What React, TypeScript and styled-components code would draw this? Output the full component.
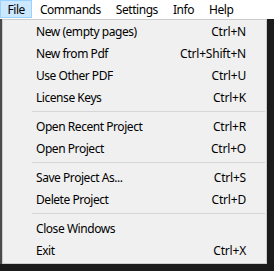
import styled, { createGlobalStyle } from "styled-components";

const GlobalStyle = createGlobalStyle`
  html, body {
    margin: 0;
    padding: 0;
    background: #1b1b1b;
  }
  body {
    font-family: "Noto Sans", "Open Sans", sans-serif;
    font-size: 12px;
    letter-spacing: -0.45px;
  }
`;

const Window = styled.div`
  width: 274px;
  height: 271px;
  display: flex;
  flex-direction: column;
  overflow: hidden;
  background: #1b1b1b;
`;

const MenuBar = styled.div`
  height: 19px;
  display: flex;
  background: #ffffff;
  flex-shrink: 0;
`;

const BarItem = styled.div<{ $active?: boolean }>`
  height: 18px;
  padding: 0 6.5px;
  display: flex;
  align-items: center;
  color: #000;
  box-sizing: border-box;
  border: 1px solid ${(p) => (p.$active ? "#99d1ff" : "transparent")};
  background: ${(p) => (p.$active ? "#cce8ff" : "transparent")};
`;

const Body = styled.div`
  flex: 1;
  display: flex;
`;

const Gutter = styled.div`
  width: 2px;
  height: 245px;
  background: #4a4a4a;
`;

const Dropdown = styled.div`
  width: 265px;
  height: 245px;
  box-sizing: border-box;
  background: #f0f0f0;
  border: 1px solid #cccccc;
  padding: 0 0 2px 0;
  display: flex;
  flex-direction: column;
`;

const Item = styled.div`
  height: 22px;
  display: flex;
  align-items: center;
  justify-content: space-between;
  padding: 0 20px 0 33px;
  color: #000;
  white-space: nowrap;
`;

const Shortcut = styled.span`
  text-align: right;
  letter-spacing: -0.2px;
`;

const Separator = styled.div`
  height: 7px;
  display: flex;
  align-items: center;
  padding-left: 29px;
  padding-right: 1px;

  &::after {
    content: "";
    flex: 1;
    height: 1px;
    background: #d7d7d7;
  }
`;

type Entry = { label: string; key?: string } | "sep";

const entries: Entry[] = [
  { label: "New (empty pages)", key: "Ctrl+N" },
  { label: "New from Pdf", key: "Ctrl+Shift+N" },
  { label: "Use Other PDF", key: "Ctrl+U" },
  { label: "License Keys", key: "Ctrl+K" },
  "sep",
  { label: "Open Recent Project", key: "Ctrl+R" },
  { label: "Open Project", key: "Ctrl+O" },
  "sep",
  { label: "Save Project As...", key: "Ctrl+S" },
  { label: "Delete Project", key: "Ctrl+D" },
  "sep",
  { label: "Close Windows" },
  { label: "Exit", key: "Ctrl+X" },
];

const menus = ["File", "Commands", "Settings", "Info", "Help"];

export default function App() {
  return (
    <Window>
      <GlobalStyle />
      <MenuBar>
        {menus.map((m, i) => (
          <BarItem key={m} $active={i === 0}>
            {m}
          </BarItem>
        ))}
      </MenuBar>
      <Body>
        <Gutter />
        <Dropdown>
          {entries.map((e, i) =>
            e === "sep" ? (
              <Separator key={i} />
            ) : (
              <Item key={i}>
                <span>{e.label}</span>
                <Shortcut>{e.key ?? ""}</Shortcut>
              </Item>
            )
          )}
        </Dropdown>
      </Body>
    </Window>
  );
}
